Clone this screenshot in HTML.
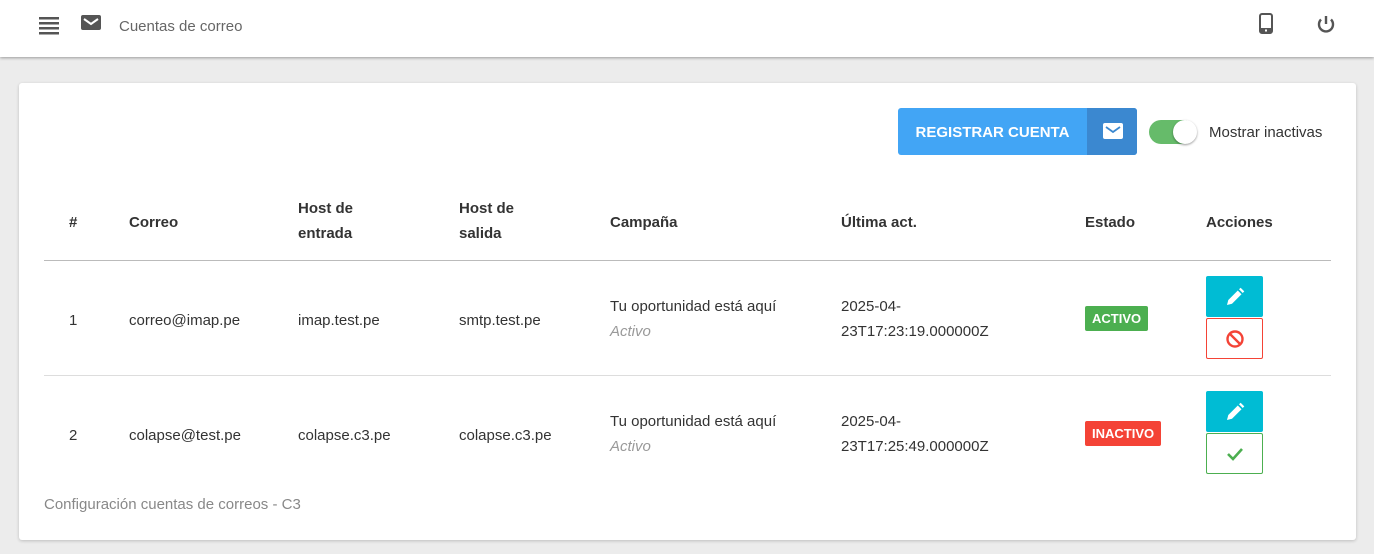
<!DOCTYPE html>
<html><head><meta charset="utf-8"><style>
*{margin:0;padding:0;box-sizing:border-box}
body{width:1374px;height:554px;background:#ececec;font-family:"Liberation Sans",sans-serif;color:#333;position:relative;overflow:hidden;font-size:15px}
.hdr{position:absolute;left:0;top:0;width:1374px;height:57px;background:#fff;box-shadow:0 1px 3px rgba(0,0,0,.35)}
.abs{position:absolute}
.card{position:absolute;left:19px;top:83px;width:1337px;height:457px;background:#fff;border-radius:3px;box-shadow:0 1px 3px rgba(0,0,0,.2)}
.th{position:absolute;font-weight:bold;font-size:15px;line-height:25px;color:#333}
.td{position:absolute;font-size:15px;line-height:25px;color:#333}
.line{position:absolute;left:25px;width:1287px;height:1px;background:#ccc}
.badge{position:absolute;color:#fff;font-weight:bold;font-size:13px;height:25px;line-height:25px;padding:0 7px;border-radius:2px}
.btn{position:absolute;width:57px;height:41px;border-radius:2px;display:flex;align-items:center;justify-content:center}
</style></head><body>
<div class="hdr">
 <svg class="abs" style="left:39px;top:17px" width="20" height="18"><g fill="#555"><rect y="0" width="20" height="2.5"/><rect y="5" width="20" height="2.5"/><rect y="10" width="20" height="2.5"/><rect y="15" width="20" height="2.5"/></g></svg>
 <svg class="abs" style="left:81px;top:15px" width="20" height="15"><rect width="20" height="15" rx="2" fill="#555"/><path d="M3 4l7 5 7-5" stroke="#fff" stroke-width="2" fill="none"/></svg>
 <div class="abs" style="left:119px;top:18px;font-size:15px;color:#666">Cuentas de correo</div>
 <svg class="abs" style="left:1259px;top:13px" width="14" height="21"><rect x="1" y="1" width="12" height="19" rx="2" fill="none" stroke="#555" stroke-width="2"/><rect x="1" y="15" width="12" height="5" fill="#555"/><rect x="6" y="16.5" width="2" height="2" fill="#fff"/></svg>
 <svg class="abs" style="left:1316px;top:14px" width="20" height="20"><path d="M5 5.5A7 7 0 1 0 15 5.5" stroke="#555" stroke-width="2.4" fill="none"/><path d="M10 2v8" stroke="#555" stroke-width="2.4"/></svg>
</div>
<div class="card">
 <div class="abs" style="left:879px;top:25px;width:239px;height:47px;background:#42a5f5;border-radius:3px;overflow:hidden">
  <div class="abs" style="left:0;top:0;width:189px;height:49px;line-height:49px;text-align:center;color:#fff;font-weight:bold;font-size:15px">REGISTRAR CUENTA</div>
  <div class="abs" style="left:189px;top:0;width:50px;height:47px;background:#3b88d0"></div>
  <svg class="abs" style="left:205px;top:15px" width="20" height="16"><rect width="20" height="16" rx="2" fill="#fff"/><path d="M3 4l7 5 7-5" stroke="#3b88d0" stroke-width="1.8" fill="none"/></svg>
 </div>
 <div class="abs" style="left:1130px;top:37px;width:47px;height:24px;background:#66bb6a;border-radius:12px"></div>
 <div class="abs" style="left:1154px;top:37px;width:24px;height:24px;background:#fff;border-radius:50%;box-shadow:0 1px 2px rgba(0,0,0,.4)"></div>
 <div class="abs" style="left:1190px;top:41px;font-size:15px;color:#333">Mostrar inactivas</div>

 <div class="th" style="left:50px;top:127px">#</div>
 <div class="th" style="left:110px;top:127px">Correo</div>
 <div class="th" style="left:279px;top:113px">Host de<br>entrada</div>
 <div class="th" style="left:440px;top:113px">Host de<br>salida</div>
 <div class="th" style="left:591px;top:127px">Campaña</div>
 <div class="th" style="left:822px;top:127px">Última act.</div>
 <div class="th" style="left:1066px;top:127px">Estado</div>
 <div class="th" style="left:1187px;top:127px">Acciones</div>
 <div class="line" style="top:177px;background:#bbb"></div>

 <div class="td" style="left:50px;top:225px">1</div>
 <div class="td" style="left:110px;top:225px">correo@imap.pe</div>
 <div class="td" style="left:279px;top:225px">imap.test.pe</div>
 <div class="td" style="left:440px;top:225px">smtp.test.pe</div>
 <div class="td" style="left:591px;top:211px">Tu oportunidad está aquí<br><i style="color:#999">Activo</i></div>
 <div class="td" style="left:822px;top:211px">2025-04-<br>23T17:23:19.000000Z</div>
 <div class="badge" style="left:1066px;top:223px;background:#4caf50">ACTIVO</div>
 <div class="btn" style="left:1187px;top:193px;background:#00bcd4"><svg width="22" height="22"><path d="M3 19l1.3-5 9.5-9.5 3.7 3.7L8 17.7z" fill="#fff"/><path d="M15 3.3l1.6-1.6 3.7 3.7-1.6 1.6z" fill="#fff"/></svg></div>
 <div class="btn" style="left:1187px;top:235px;border:1px solid #f44336;background:#fff"><svg width="20" height="20"><circle cx="10" cy="10" r="7.5" stroke="#f44336" stroke-width="2.4" fill="none"/><path d="M5 5l10 10" stroke="#f44336" stroke-width="2.4"/></svg></div>
 <div class="line" style="top:292px;background:#ddd"></div>

 <div class="td" style="left:50px;top:340px">2</div>
 <div class="td" style="left:110px;top:340px">colapse@test.pe</div>
 <div class="td" style="left:279px;top:340px">colapse.c3.pe</div>
 <div class="td" style="left:440px;top:340px">colapse.c3.pe</div>
 <div class="td" style="left:591px;top:326px">Tu oportunidad está aquí<br><i style="color:#999">Activo</i></div>
 <div class="td" style="left:822px;top:326px">2025-04-<br>23T17:25:49.000000Z</div>
 <div class="badge" style="left:1066px;top:338px;background:#f44336">INACTIVO</div>
 <div class="btn" style="left:1187px;top:308px;background:#00bcd4"><svg width="22" height="22"><path d="M3 19l1.3-5 9.5-9.5 3.7 3.7L8 17.7z" fill="#fff"/><path d="M15 3.3l1.6-1.6 3.7 3.7-1.6 1.6z" fill="#fff"/></svg></div>
 <div class="btn" style="left:1187px;top:350px;border:1px solid #4caf50;background:#fff"><svg width="20" height="20"><path d="M3 10l5 5 9-10" stroke="#4caf50" stroke-width="2.6" fill="none"/></svg></div>

 <div class="abs" style="left:25px;top:413px;font-size:15px;color:#888">Configuración cuentas de correos - C3</div>
</div>
</body></html>
